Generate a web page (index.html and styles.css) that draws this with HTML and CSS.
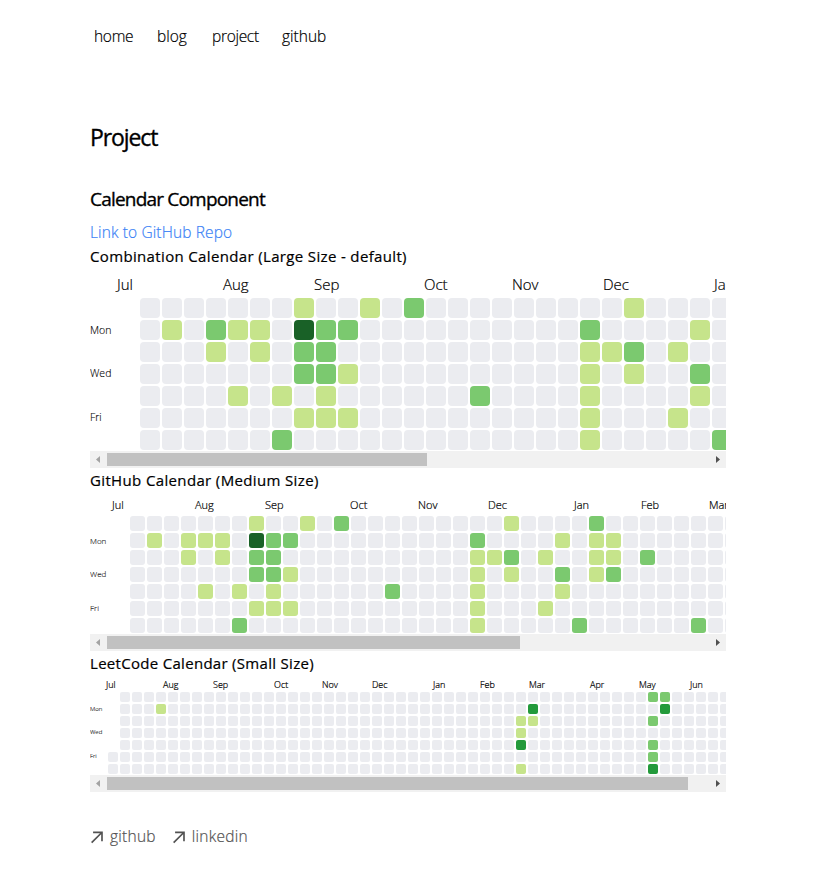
FILE: index.html
```html
<!DOCTYPE html>
<html lang="en">
<head>
<meta charset="utf-8">
<title>Project</title>
<link rel="stylesheet" href="styles.css">
</head>
<body>
<div class="page">
  <nav class="nav">
    <a class="nav-home">home</a><a class="nav-blog">blog</a><a class="nav-project">project</a><a class="nav-github">github</a>
  </nav>
  <main>
    <h1>Project</h1>
    <h2>Calendar Component</h2>
    <a class="repo">Link to GitHub Repo</a>
    <h3 class="title-large">Combination Calendar (Large Size - default)</h3>
    <section class="calendar large" data-name="large"></section>
    <h3 class="title-medium">GitHub Calendar (Medium Size)</h3>
    <section class="calendar medium" data-name="medium"></section>
    <h3 class="title-small">LeetCode Calendar (Small Size)</h3>
    <section class="calendar small" data-name="small"></section>
  </main>
  <footer class="footer">
    <a><svg width="12" height="12" viewBox="0 0 12 12"><path d="M2.07102 11.3494L0.963068 10.2415L9.2017 1.98864H2.83807L2.85227 0.454545H11.8438V9.46023H10.2955L10.3097 3.09659L2.07102 11.3494Z" fill="currentColor"/></svg><span class="foot-github">github</span></a>
    <a><svg width="12" height="12" viewBox="0 0 12 12"><path d="M2.07102 11.3494L0.963068 10.2415L9.2017 1.98864H2.83807L2.85227 0.454545H11.8438V9.46023H10.2955L10.3097 3.09659L2.07102 11.3494Z" fill="currentColor"/></svg><span class="foot-linkedin">linkedin</span></a>
  </footer>
</div>
<script src="script.js"></script>
</body>
</html>
```
FILE: styles.css
```css
* { box-sizing: border-box; }
body { margin: 0; background: #fff; color: #000; font-family: "Open Sans", "Noto Sans", sans-serif; font-size: 15.5px; line-height: 24px; -webkit-text-stroke: 0.2px; }
.page { width: 636px; margin-left: 90px; }
.nav { display: flex; padding: 24px 0 0 4px; gap: 24px; height: 124px; font-size: 15.5px; font-weight: 300; white-space: nowrap; }
h1, h2, h3 { margin: 0; font-weight: 500; white-space: nowrap; -webkit-text-stroke: 0.35px; }
h1 { font-size: 23px; line-height: 32px; height: 62px; letter-spacing: -1.1px; margin-top: -3px; }
h2 { font-size: 19px; line-height: 28px; height: 37px; letter-spacing: -0.8px; padding-top: 2px; }
h3 { font-size: 15px; line-height: 24px; height: 24px; -webkit-text-stroke: 0.2px; }
.title-large { letter-spacing: 0.35px; }
.title-medium { letter-spacing: 0.36px; }
.title-small { letter-spacing: 0.3px; }
.repo { display: block; height: 24px; color: #3b82f6; font-weight: 300; letter-spacing: 0.12px; }
.nav-home { width: 39px; letter-spacing: -0.3px; }
.nav-blog { width: 31px; }
.nav-project { width: 46px; letter-spacing: -0.3px; }

.large { --cell: 20px; --month: 15px; --day: 10.5px; --left: 50px; --head: 30px; --bottom: 1px; --radius: 4px; }
.medium { --cell: 15px; --month: 11px; --day: 8px; --left: 40px; --head: 24px; --bottom: 1px; --radius: 3px; }
.small { --cell: 10px; --month: 9px; --day: 6px; --left: 18px; --head: 17px; --bottom: 1px; --radius: 2px; }
.view { overflow: hidden; }
.months { display: flex; height: var(--head); font-size: var(--month); font-weight: 300; line-height: calc(var(--head) + 2px); }
.month { flex: none; white-space: nowrap; }
.body { display: flex; padding-bottom: var(--bottom); }
.days { flex: none; width: var(--left); display: grid; grid-template-rows: repeat(7, var(--cell)); row-gap: 1.75px; align-content: start; font-size: var(--day); font-weight: 300; line-height: var(--cell); -webkit-text-stroke: 0.12px; }
.medium .days, .small .days { color: #222; }
.cells { display: grid; grid-template-rows: repeat(7, var(--cell)); grid-auto-columns: var(--cell); grid-auto-flow: column; gap: 2px; }
.cell { border-radius: var(--radius); background: #ebecf0; }
.cell.l1 { background: #c6e48b; }
.cell.l2 { background: #7bc96f; }
.cell.l3 { background: #239a3b; }
.cell.l4 { background: #196127; }
.cell.none { background: transparent; }

.scrollbar { display: flex; align-items: center; justify-content: space-between; height: 17px; background: #f1f1f1; }
.scrollbar svg { flex: none; width: 17px; height: 17px; }
.thumb { height: 13px; background: #c1c1c1; margin-right: auto; }

.footer { display: flex; gap: 16px; margin-top: 32px; color: #525252; font-weight: 300; }
.footer a { display: flex; align-items: center; gap: 7px; }
.footer svg { margin-top: 2px; width: 13px; height: 13px; }
.foot-github, .foot-linkedin { letter-spacing: 0.25px; }
```
FILE: script.js
```js
const base = [
  '7:1 10:1 12:2 22:1 27:2',
  '1:1 3:2 4:1 5:1 7:4 8:2 9:2 20:2 25:1 27:1 28:1',
  '3:1 5:1 7:2 8:2 20:1 21:1 22:2 24:1 27:1 28:1 30:2',
  '7:2 8:2 9:1 20:1 22:1 25:2 27:1 28:2',
  '4:1 6:1 8:1 15:2 20:1 25:1',
  '7:1 8:1 9:1 20:1 24:1',
  '6:2 20:1 26:2 33:2'
];
const medium = base.slice();
medium[1] = medium[1].replace('3:2', '3:1');
const calendars = {
  large: {
    levels: base, columns: 36, thumb: 320,
    months: [['Jul', 27], ['Aug', 133], ['Sep', 224], ['Oct', 334], ['Nov', 422], ['Dec', 513], ['Jan', 624]]
  },
  medium: {
    levels: medium, columns: 36, thumb: 413,
    months: [['Jul', 22], ['Aug', 105], ['Sep', 175], ['Oct', 260], ['Nov', 328], ['Dec', 398], ['Jan', 484], ['Feb', 551], ['Mar', 619]]
  },
  small: {
    levels: ['45:2 46:2', '4:1 35:3 46:3', '34:1 35:1 45:2', '34:1', '34:3 45:2', '45:2', '34:1 45:3'],
    columns: 52, thumb: 581, skip: 5,
    months: [['Jul', 16], ['Aug', 73], ['Sep', 123], ['Oct', 184], ['Nov', 232], ['Dec', 282], ['Jan', 343], ['Feb', 390], ['Mar', 439], ['Apr', 500], ['May', 549], ['Jun', 600]]
  }
};

document.querySelectorAll('.calendar').forEach(el => {
  const c = calendars[el.dataset.name];
  const rows = c.levels.map(r => Object.fromEntries(r.split(' ').map(p => p.split(':'))));
  const months = c.months.map(([name, start], i) => {
    const next = c.months[i + 1];
    const lead = i === 0 ? `margin-left:${start}px;` : '';
    return `<span class="month" style="${lead}width:${next ? next[1] - start : 40}px">${name}</span>`;
  }).join('');
  const days = ['', 'Mon', '', 'Wed', '', 'Fri', ''].map(d => `<span>${d}</span>`).join('');
  let cells = '';
  for (let x = 0; x < c.columns; x++) {
    for (let y = 0; y < 7; y++) {
      const blank = x === 0 && y < (c.skip || 0);
      cells += `<i class="cell ${blank ? 'none' : 'l' + (rows[y][x] || 0)}"></i>`;
    }
  }
  el.innerHTML = `<div class="view"><div class="months">${months}</div>
    <div class="body"><div class="days">${days}</div><div class="cells">${cells}</div></div></div>
    <div class="scrollbar">
      <svg viewBox="0 0 17 17"><path d="M10 5v7L6 8.500z" fill="#a3a3a3"/></svg>
      <div class="thumb" style="width:${c.thumb}px"></div>
      <svg viewBox="0 0 17 17"><path d="M7 5v7l4-3.500z" fill="#505050"/></svg>
    </div>`;
});
```
